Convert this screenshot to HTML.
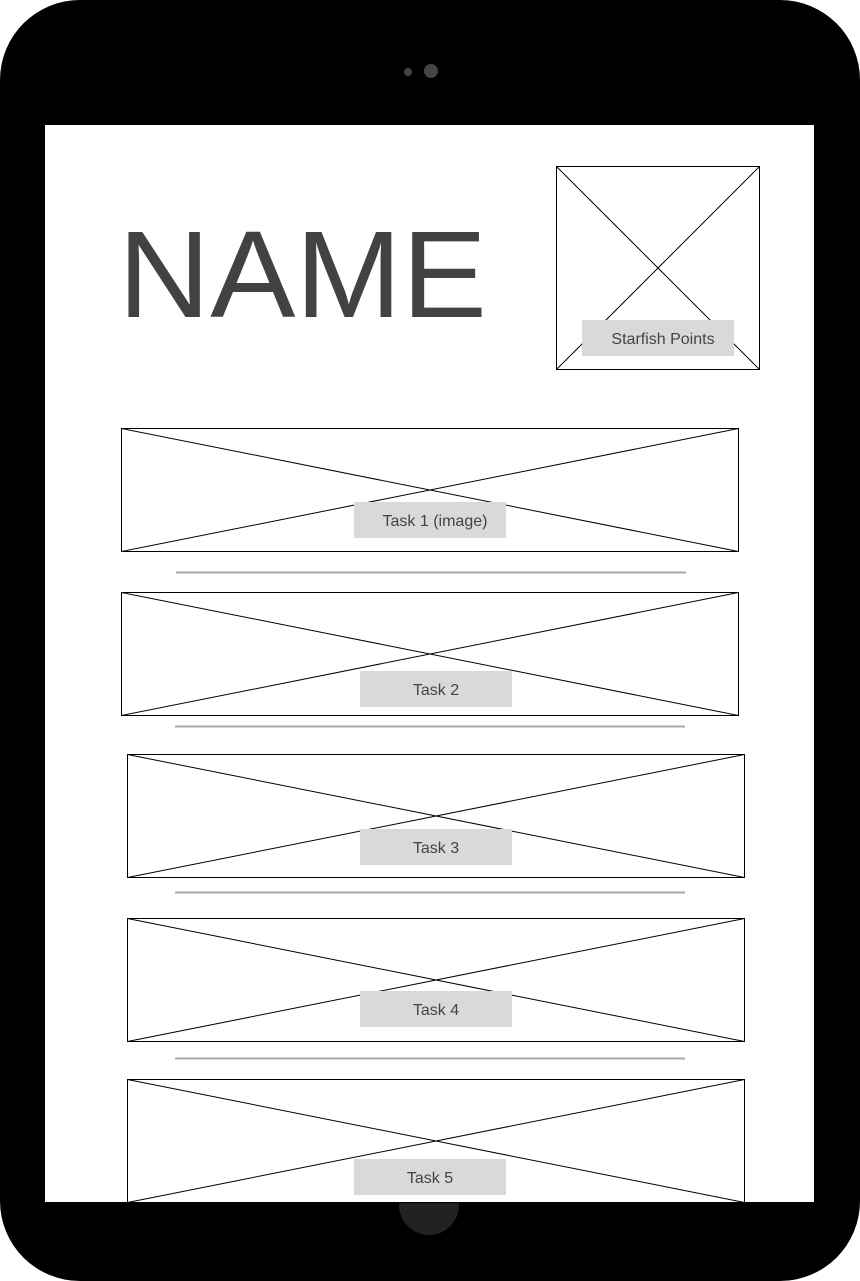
<!DOCTYPE html>
<html><head><meta charset="utf-8"><style>
html,body{margin:0;padding:0;background:#fff;}
body{width:860px;height:1281px;overflow:hidden;}
</style></head><body>
<svg width="860" height="1281" viewBox="0 0 860 1281" xmlns="http://www.w3.org/2000/svg" style="display:block">
<rect x="0" y="0" width="860" height="1281" fill="#fff"/>
<rect x="0" y="0" width="860" height="1281" rx="80" ry="80" fill="#000"/>
<circle cx="408" cy="72" r="4" fill="#444"/>
<circle cx="431" cy="71" r="7" fill="#444"/>
<circle cx="429" cy="1205" r="30" fill="#222"/>
<rect x="45" y="125" width="769" height="1077" fill="#fff"/>
<text x="118" y="317" font-family="Liberation Sans, sans-serif" font-size="123" fill="#424242" textLength="369" lengthAdjust="spacingAndGlyphs">NAME</text>
<g stroke="#000" stroke-width="1" fill="none">
<rect x="556.5" y="166.5" width="203" height="203"/>
<line x1="556.5" y1="166.5" x2="759.5" y2="369.5"/>
<line x1="759.5" y1="166.5" x2="556.5" y2="369.5"/>
<rect x="121.5" y="428.5" width="617" height="123"/>
<line x1="121.5" y1="428.5" x2="738.5" y2="551.5"/>
<line x1="738.5" y1="428.5" x2="121.5" y2="551.5"/>
<rect x="121.5" y="592.5" width="617" height="123"/>
<line x1="121.5" y1="592.5" x2="738.5" y2="715.5"/>
<line x1="738.5" y1="592.5" x2="121.5" y2="715.5"/>
<rect x="127.5" y="754.5" width="617" height="123"/>
<line x1="127.5" y1="754.5" x2="744.5" y2="877.5"/>
<line x1="744.5" y1="754.5" x2="127.5" y2="877.5"/>
<rect x="127.5" y="918.5" width="617" height="123"/>
<line x1="127.5" y1="918.5" x2="744.5" y2="1041.5"/>
<line x1="744.5" y1="918.5" x2="127.5" y2="1041.5"/>
<rect x="127.5" y="1079.5" width="617" height="123"/>
<line x1="127.5" y1="1079.5" x2="744.5" y2="1202.5"/>
<line x1="744.5" y1="1079.5" x2="127.5" y2="1202.5"/>
</g>
<g stroke="#aaa" stroke-width="2">
<line x1="176" y1="572.5" x2="686" y2="572.5"/>
<line x1="175" y1="726.5" x2="685" y2="726.5"/>
<line x1="175" y1="892.5" x2="685" y2="892.5"/>
<line x1="175" y1="1058.5" x2="685" y2="1058.5"/>
</g>
<g fill="#d9d9d9">
<rect x="582" y="320" width="152" height="36"/>
<rect x="354" y="502" width="152" height="36"/>
<rect x="360" y="671" width="152" height="36"/>
<rect x="360" y="829" width="152" height="36"/>
<rect x="360" y="991" width="152" height="36"/>
<rect x="354" y="1159" width="152" height="36"/>
</g>
<g font-family="Liberation Sans, sans-serif" font-size="16" fill="#444" text-anchor="middle">
<text x="663" y="344">Starfish Points</text>
<text x="435" y="526">Task 1 (image)</text>
<text x="436" y="695">Task 2</text>
<text x="436" y="853">Task 3</text>
<text x="436" y="1015">Task 4</text>
<text x="430" y="1183">Task 5</text>
</g>
</svg>
</body></html>
